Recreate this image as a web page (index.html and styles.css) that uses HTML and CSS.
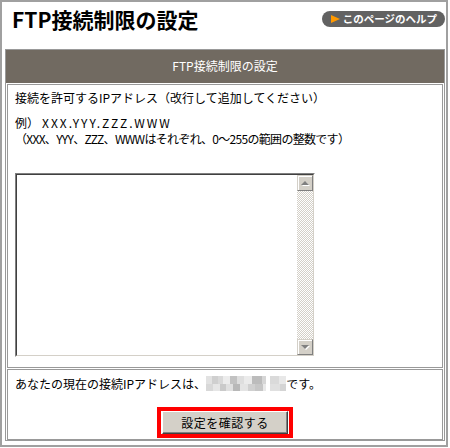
FILE: index.html
```html
<!DOCTYPE html>
<html lang="ja">
<head>
    <meta charset="UTF-8">
    <title>FTP接続制限の設定</title>
    <link rel="stylesheet" href="styles.css">
</head>
<body>
    <div class="frame">
        <div class="top">
            <h1 class="title">FTP接続制限の設定</h1>
            <a href="#" class="help"><span class="help-arrow"></span>このページのヘルプ</a>
        </div>

        <div class="panel">
            <div class="panel-head">FTP接続制限の設定</div>

            <div class="cell cell-form">
                <p class="note">接続を許可するIPアドレス（改行して追加してください）</p>
                <p class="example">例）<span class="ex-ip">XXX.YYY.ZZZ.WWW</span></p>
                <p class="example example-last"><span class="ex-rule">（XXX、YYY、ZZZ、WWWはそれぞれ、0～255の範囲の整数です）</span></p>
                <div class="ip-box">
                    <div class="ip-inner">
                        <textarea class="ip-input"></textarea>
                        <div class="scrollbar">
                            <span class="sb-btn sb-up"></span>
                            <span class="sb-track"></span>
                            <span class="sb-btn sb-down"></span>
                        </div>
                    </div>
                </div>
            </div>

            <div class="cell cell-foot">
                <p class="current">あなたの現在の接続IPアドレスは、<span class="ip-mask"></span>です。</p>
                <div class="submit-ring">
                    <button class="submit">設定を確認する</button>
                </div>
            </div>
        </div>
    </div>
</body>
</html>
```

FILE: styles.css
```css
body {
    margin: 0;
    background-color: white;
    color: black;
    font-family: "Noto Sans CJK JP", sans-serif;
    font-size: 12px;
    line-height: 15px;
}
p {
    margin: 0;
}
.frame {
    width: 448px;
    height: 447px;
    box-sizing: border-box;
    border: 2px solid #a0a0a0;
}
.top {
    height: 34px;
    display: flex;
    align-items: center;
    justify-content: space-between;
    padding: 0 1px 0 10px;
}
.title {
    margin: 0;
    font-size: 21px;
    font-weight: bold;
    line-height: 24px;
}
.help {
    display: flex;
    align-items: center;
    height: 16px;
    padding: 0 8px 0 9px;
    border-radius: 8px;
    background-color: #626262;
    color: white;
    text-decoration: none;
    font-size: 10.5px;
    font-weight: bold;
    line-height: 16px;
}
.help-arrow {
    width: 0;
    height: 0;
    border-left: 9px solid #ff9900;
    border-top: 4px solid transparent;
    border-bottom: 4px solid transparent;
    margin-right: 3px;
}
.panel {
    margin: 13px 1px 0 3px;
    border: 1px solid #999;
    padding: 0 1px;
    display: flex;
    flex-direction: column;
    gap: 1px;
}
.panel-head {
    height: 33px;
    margin: 0 -1px;
    background-color: #716a61;
    color: white;
    text-align: center;
    line-height: 32px;
}
.cell {
    border: 1px solid #999;
    padding: 0 7px;
}
.cell-form {
    padding-top: 5px;
    padding-bottom: 10px;
}
.note {
    margin-bottom: 10px;
}
.example {
    line-height: 16px;
}
.example-last {
    margin-bottom: 26px;
}
.ex-ip {
    letter-spacing: 2px;
    margin-left: 3px;
}
.ex-rule {
    letter-spacing: -0.7px;
}
.ip-box {
    width: 300px;
    height: 184px;
    box-sizing: border-box;
    border: 1px solid;
    border-color: #808080 #ffffff #ffffff #808080;
}
.ip-inner {
    height: 100%;
    box-sizing: border-box;
    border: 1px solid;
    border-color: #404040 #d4d0c8 #d4d0c8 #404040;
    display: flex;
}
.ip-input {
    flex: 1;
    border: none;
    margin: 0;
    padding: 2px;
    resize: none;
    outline: none;
    background: white;
    font-family: inherit;
    font-size: 12px;
}
.scrollbar {
    width: 16px;
    display: flex;
    flex-direction: column;
}
.sb-btn {
    height: 16px;
    box-sizing: border-box;
    background-color: #d4d0c8;
    border: 1px solid;
    border-color: #d4d0c8 #808080 #808080 #d4d0c8;
    box-shadow: inset 1px 1px 0 #ffffff;
    display: flex;
    align-items: center;
    justify-content: center;
}
.sb-up::after,
.sb-down::after {
    content: "";
    width: 0;
    height: 0;
    border-left: 4px solid transparent;
    border-right: 4px solid transparent;
    filter: drop-shadow(1px 1px 0 #ffffff);
}
.sb-up::after {
    border-bottom: 4px solid #808080;
}
.sb-down::after {
    border-top: 4px solid #808080;
}
.sb-track {
    flex: 1;
    background: repeating-conic-gradient(#d4d0c8 0 25%, #ffffff 0 50%) 0 0 / 2px 2px;
}
.cell-foot {
    padding-top: 6px;
    padding-bottom: 1px;
}
.current {
    margin-bottom: 16px;
}
.ip-mask {
    display: inline-block;
    width: 80px;
    height: 15px;
    vertical-align: top;
    background:
        linear-gradient(90deg, #e2e2e2 0 6px, #cfcfcf 6px 12px, #d9d9d9 12px 17px, #ececec 17px 24px, #c2c2c2 24px 31px, #dedede 31px 38px, #ebebeb 38px 46px, #bcbcbc 46px 56px, #d6d6d6 56px 60px, #ffffff 60px 64px, #dadada 64px 73px, #e8e8e8 73px 80px) 0 0 / 80px 8px no-repeat,
        linear-gradient(90deg, #d8d8d8 0 7px, #e6e6e6 7px 14px, #cacaca 14px 20px, #e0e0e0 20px 27px, #b8b8b8 27px 34px, #e4e4e4 34px 42px, #d0d0d0 42px 49px, #c6c6c6 49px 57px, #e9e9e9 57px 60px, #ffffff 60px 64px, #e0e0e0 64px 74px, #d4d4d4 74px 80px) 0 8px / 80px 7px no-repeat;
}
.submit-ring {
    width: max-content;
    margin: 0 auto;
    border: 4px solid #ff0000;
    padding: 0 1px;
}
.submit {
    display: block;
    width: 126px;
    height: 23px;
    margin: 0;
    padding: 0;
    background-color: #d4d0c8;
    border: 1px solid;
    border-color: #ffffff #404040 #404040 #ffffff;
    box-shadow: inset -1px -1px 0 #808080;
    color: black;
    font-family: inherit;
    font-size: 12px;
    letter-spacing: 0.5px;
}
```
